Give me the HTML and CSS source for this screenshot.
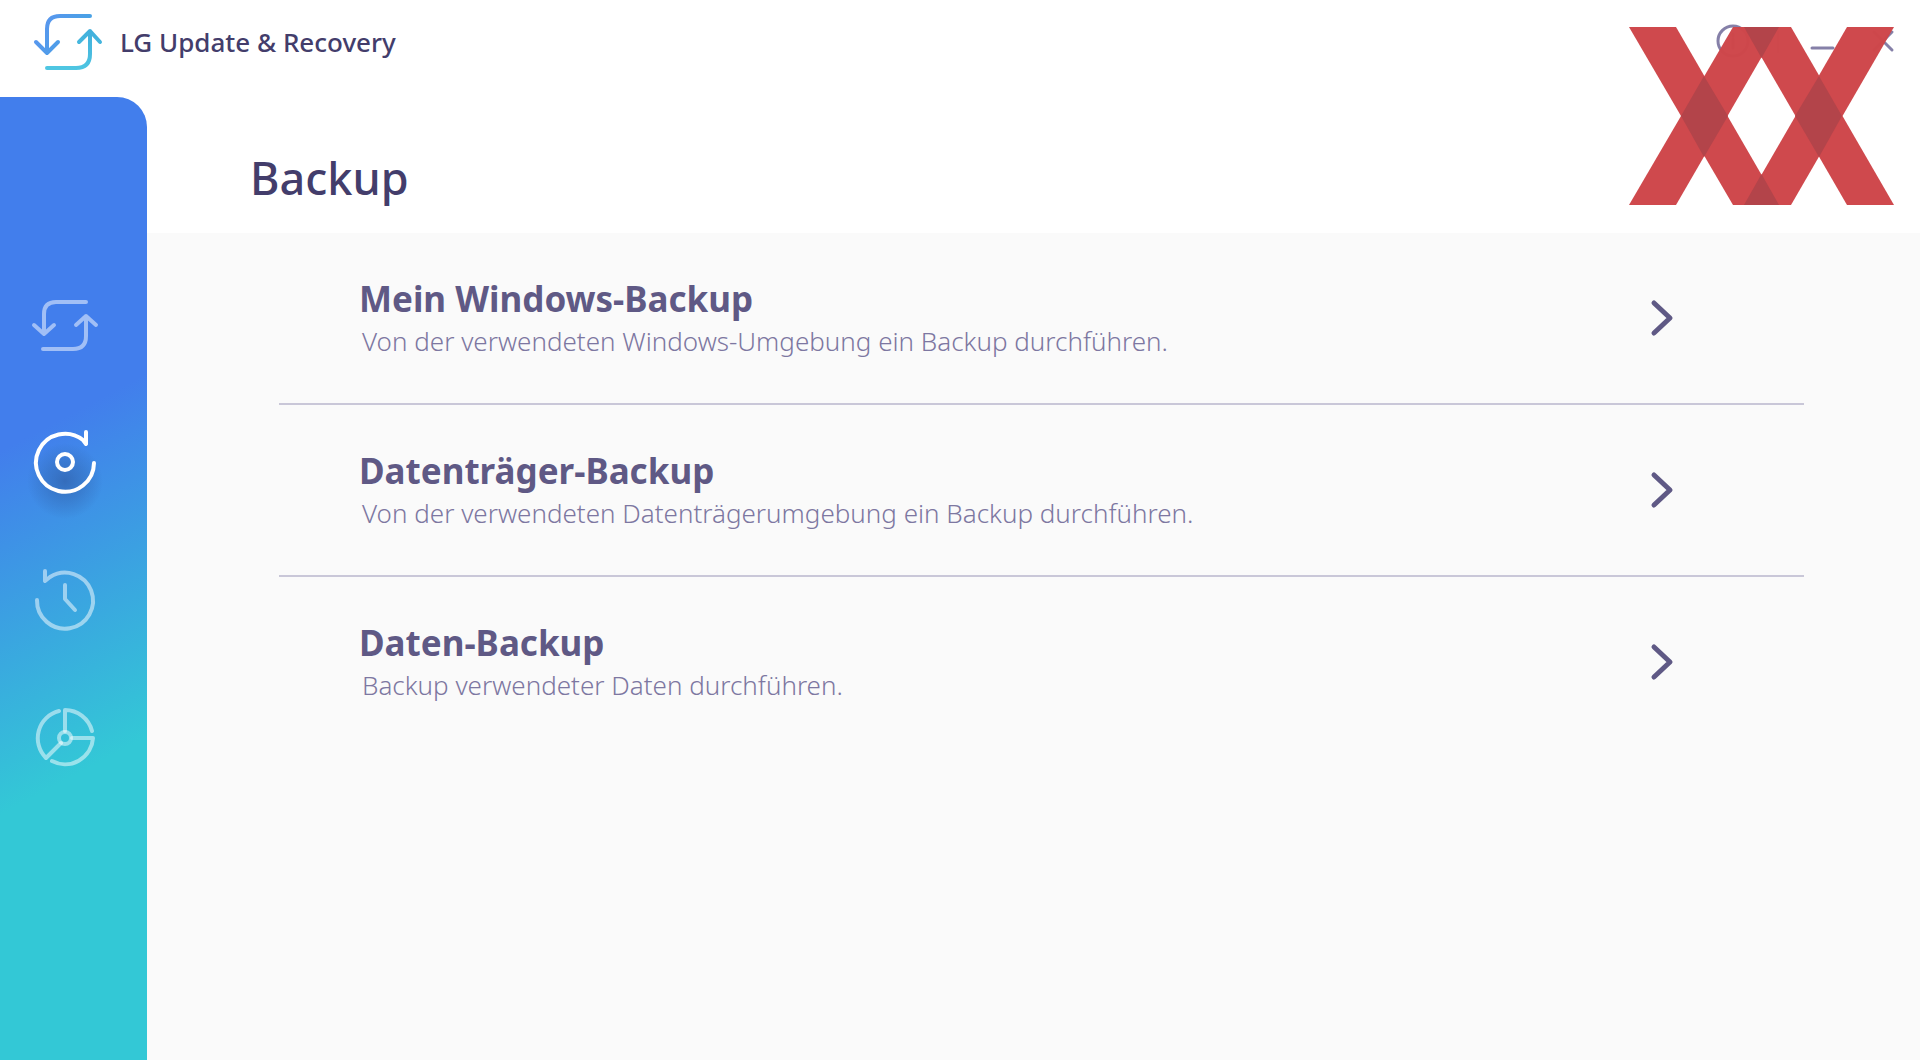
FILE: index.html
```html
<!DOCTYPE html>
<html lang="de">
<head>
  <meta charset="UTF-8" />
  <meta name="viewport" content="width=device-width, initial-scale=1" />
  <title>LG Update &amp; Recovery</title>
  <link rel="stylesheet" href="styles.css">
</head>
<body>

<header class="titlebar">
  <svg class="logo" viewBox="0 0 76 66" aria-hidden="true">
    <defs>
      <linearGradient id="logo-blue" gradientUnits="userSpaceOnUse" x1="10" y1="0" x2="64" y2="30">
        <stop offset="0" stop-color="#5c94f0" />
        <stop offset="1" stop-color="#43a5e2" />
      </linearGradient>
      <linearGradient id="logo-cyan" gradientUnits="userSpaceOnUse" x1="60" y1="20" x2="50" y2="62">
        <stop offset="0" stop-color="#41afdc" />
        <stop offset="1" stop-color="#4fc6e2" />
      </linearGradient>
    </defs>
    <path stroke="url(#logo-blue)" d="M60 7H30Q17 7 17 20V44M6 33L17 44L28 33" />
    <path stroke="url(#logo-cyan)" d="M17 59H46Q60 59 60 45V22M49 33L60 22L70 33" />
  </svg>
  <span class="app-name">LG Update &amp; Recovery</span>
  <div class="window-controls">
    <button type="button" aria-label="Info">
      <svg viewBox="0 0 32 32"><circle cx="16" cy="15" r="15" /><path d="M16 8V10M16 13V22" /></svg>
    </button>
    <span class="separator"></span>
    <button type="button" aria-label="Minimieren">
      <svg viewBox="0 0 32 32"><path d="M5 22H26" /></svg>
    </button>
    <button type="button" aria-label="Schließen">
      <svg viewBox="0 0 32 32"><path d="M7 6L25 24M25 6L7 24" /></svg>
    </button>
  </div>
</header>

<svg class="watermark" viewBox="0 0 265 178" aria-hidden="true">
  <g fill="#cf464a">
    <path d="M0 0H47L150 178H104Z" />
    <path d="M104 0H150L47 178H0Z" />
    <path d="M115 0H162L265 178H218Z" />
    <path d="M218 0H265L162 178H115Z" />
  </g>
  <g fill="#b24147">
    <path d="M75 49L99 89L75 130L52 89Z" />
    <path d="M190 49L213 89L190 130L166 89Z" />
    <path d="M115 0H150L132.500 31Z" />
    <path d="M115 178H150L132.500 147Z" />
  </g>
</svg>

<div class="layout">
  <nav class="sidebar">
    <a href="#update" aria-label="Update">
      <svg viewBox="0 0 80 80"><path d="M61 16H31Q19 16 19 28V48M9 39L19 48L29 39M18 63H48Q61 63 61 50V30M51 39L61 30L71 39" /></svg>
    </a>
    <a href="#backup" class="active" aria-label="Backup" aria-current="page">
      <svg viewBox="0 0 80 80">
        <defs>
          <radialGradient id="disc-shadow">
            <stop offset="0" stop-color="#2f5fa8" stop-opacity="0.7" />
            <stop offset="0.500" stop-color="#3268b4" stop-opacity="0.450" />
            <stop offset="1" stop-color="#3268b4" stop-opacity="0" />
          </radialGradient>
        </defs>
        <circle class="shadow" cx="40" cy="58" r="38" fill="url(#disc-shadow)" />
        <path d="M69 40A29 29 0 1 1 58 17L61 21V9" />
        <circle cx="40" cy="39" r="8" />
      </svg>
    </a>
    <a href="#recovery" aria-label="Wiederherstellung">
      <svg viewBox="0 0 80 80"><path d="M12 40A28 28 0 1 0 25 17L20 21V11M40 25V39L50 50" /></svg>
    </a>
    <a href="#disk" aria-label="Datenträger">
      <svg viewBox="0 0 80 80">
        <circle cx="40" cy="41" r="6" />
        <path d="M34 14A28 28 0 0 0 21 61L36 46M40 34V13A28 28 0 0 1 67 34M47 41H68A28 28 0 0 1 27 64" />
      </svg>
    </a>
  </nav>

  <main class="content">
    <h1>Backup</h1>
    <ul class="backup-list">
      <li>
        <a href="#windows-backup">
          <span class="text">
            <strong>Mein Windows-Backup</strong>
            <span class="desc">Von der verwendeten Windows-Umgebung ein Backup durchführen.</span>
          </span>
          <svg class="chevron" viewBox="0 0 24 40"><path d="M4 5L20 20L4 35" /></svg>
        </a>
      </li>
      <li>
        <a href="#disk-backup">
          <span class="text">
            <strong>Datenträger-Backup</strong>
            <span class="desc">Von der verwendeten Datenträgerumgebung ein Backup durchführen.</span>
          </span>
          <svg class="chevron" viewBox="0 0 24 40"><path d="M4 5L20 20L4 35" /></svg>
        </a>
      </li>
      <li>
        <a href="#data-backup">
          <span class="text">
            <strong>Daten-Backup</strong>
            <span class="desc">Backup verwendeter Daten durchführen.</span>
          </span>
          <svg class="chevron" viewBox="0 0 24 40"><path d="M4 5L20 20L4 35" /></svg>
        </a>
      </li>
    </ul>
  </main>
</div>

</body>
</html>
```
FILE: styles.css
```css
* {
  box-sizing: border-box;
}

body {
  margin: 0;
  min-height: 100vh;
  display: flex;
  flex-direction: column;
  font-family: "Noto Sans", "Open Sans", sans-serif;
  color: #433d6b;
  background-color: #fff;
}

svg {
  display: block;
  fill: none;
  stroke-linecap: round;
  stroke-linejoin: round;
}

a {
  color: inherit;
  text-decoration: none;
}

.titlebar {
  display: flex;
  align-items: center;
  min-height: 97px;
  padding: 0 21px 14px 30px;
}

.logo {
  width: 76px;
  height: 66px;
  stroke-width: 4;
}

.app-name {
  margin-left: 14px;
  font-size: 26px;
  font-weight: 500;
}

.window-controls {
  display: flex;
  align-items: center;
  gap: 28px;
  margin-left: auto;
}

.window-controls button {
  padding: 0;
  border: none;
  background: none;
  cursor: pointer;
}

.window-controls svg {
  width: 32px;
  height: 32px;
  overflow: visible;
  stroke: #8580a8;
  stroke-width: 3;
}

.separator {
  width: 2px;
  height: 22px;
  background-color: #c9c7d8;
}

.watermark {
  position: absolute;
  top: 27px;
  right: 26px;
  width: 265px;
  height: 178px;
  opacity: 0.98;
  pointer-events: none;
}

.layout {
  display: flex;
  flex: 1;
}

.sidebar {
  width: 147px;
  padding: 160px 18px 0 0;
  border-top-right-radius: 30px;
  background: linear-gradient(152deg, #427eec 34%, #33c8d6 69%);
}

.sidebar a {
  display: flex;
  align-items: center;
  justify-content: center;
  height: 137px;
}

.sidebar svg {
  width: 80px;
  height: 80px;
  overflow: visible;
  stroke: rgba(255, 255, 255, 0.5);
  stroke-width: 4;
}

.sidebar .active svg {
  stroke: #fff;
}

.sidebar .shadow {
  stroke: none;
}

.content {
  flex: 1;
  background-color: #fafafa;
}

h1 {
  margin: 0;
  padding: 48px 103px 22px;
  font-size: 45px;
  font-weight: 500;
  line-height: 66px;
  background-color: #fff;
}

.backup-list {
  margin: 0;
  padding: 0 116px 0 132px;
  list-style: none;
}

.backup-list li + li {
  border-top: 2px solid #c9c7d8;
}

.backup-list a {
  display: flex;
  align-items: center;
  justify-content: space-between;
  min-height: 170px;
  padding: 0 130px 0 80px;
}

.text {
  display: flex;
  flex-direction: column;
}

.text strong {
  font-size: 35px;
  font-weight: 700;
  line-height: 46px;
  color: #5f5985;
}

.desc {
  padding-left: 3px;
  font-size: 26px;
  font-weight: 300;
  line-height: 38px;
  color: #7d77a1;
}

.chevron {
  width: 24px;
  height: 40px;
  stroke: #5f5985;
  stroke-width: 5;
}
```
